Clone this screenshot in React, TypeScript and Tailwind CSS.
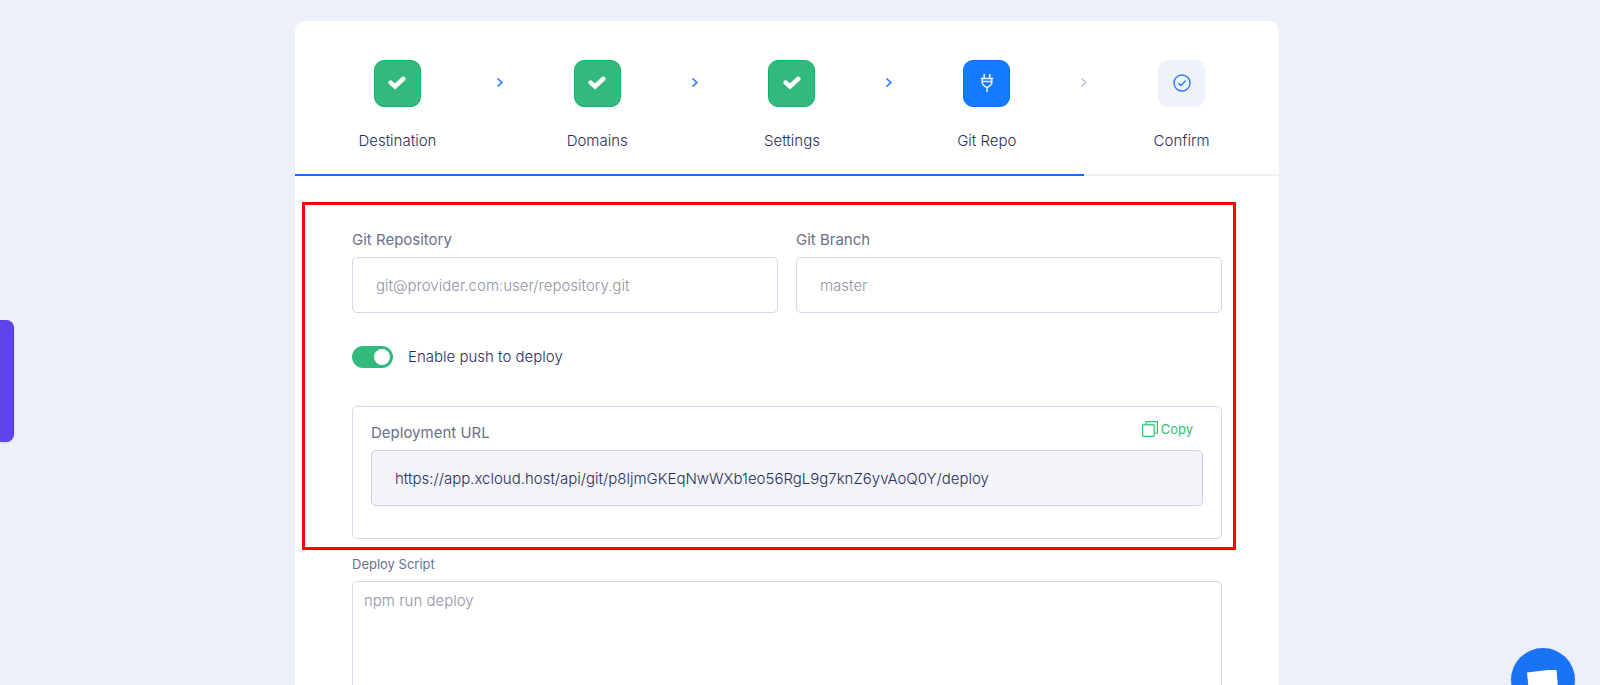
import { useState } from "react";

type StepStatus = "done" | "active" | "pending";

type Step = {
  label: string;
  status: StepStatus;
};

const steps: Step[] = [
  { label: "Destination", status: "done" },
  { label: "Domains", status: "done" },
  { label: "Settings", status: "done" },
  { label: "Git Repo", status: "active" },
  { label: "Confirm", status: "pending" },
];

const boxStyles = {
  done: "bg-[#32ba7c] border-[#12b46c] text-white",
  active: "bg-[#147aff] border-[#0a70ff] text-white",
  pending: "bg-[#eef2f9] border-[#eef2f9] text-[#2b7cff]",
};

const lineStyles = {
  done: "border-[#0b6fff]",
  active: "border-[#0b6fff]",
  pending: "border-[#edf1f8]",
};

function StepIcon({ status }: { status: StepStatus }) {
  if (status === "done") {
    return (
      <svg width="18" height="14" viewBox="0 0 18 14" fill="none" stroke="currentColor" strokeWidth="4.6" strokeLinecap="round" aria-hidden="true">
        <path d="M2.7 6.6 L7 10.4 L15.2 2.9" />
      </svg>
    );
  }

  if (status === "active") {
    return (
      <svg width="14" height="20" viewBox="0 0 14 20" fill="none" stroke="currentColor" strokeOpacity="0.9" strokeWidth="1.5" strokeLinecap="round" aria-hidden="true">
        <path d="M4.2 1.6V5.4M9.8 1.6V5.4M1.4 5.6H12.6M2.2 5.6V9.6C2.2 12 4.4 13.4 7 14.6C9.6 13.4 11.8 12 11.8 9.6V5.6M3 8.4H11M7 14.6V18.4" />
      </svg>
    );
  }

  return (
    <svg width="18" height="18" viewBox="0 0 18 18" fill="none" stroke="currentColor" strokeWidth="1.4" strokeLinecap="round" strokeLinejoin="round" aria-hidden="true">
      <circle cx="9" cy="9" r="8" />
      <path d="M5.8 9.4L8 11.4L12.2 7" />
    </svg>
  );
}

function Stepper() {
  return (
    <ol className="grid grid-cols-[205fr_195fr_195fr_195fr_195fr]">
      {steps.map((step, index) => (
        <li
          key={step.label}
          className={`relative flex flex-col items-center border-b-2 pt-[39px] pb-[21px] ${lineStyles[step.status]}`}
        >
          <div
            className={`flex size-[47px] items-center justify-center rounded-[10px] border pb-0.5 ${boxStyles[step.status]}`}
          >
            <StepIcon status={step.status} />
          </div>
          <span className="mt-[22px] text-[15px] leading-6 text-[#2a2e5c]">{step.label}</span>

          {index < steps.length - 1 && (
            <svg
              className={`absolute top-[56px] -right-1 ${step.status === "active" ? "text-[#bcc6de]" : "text-[#1f7aff]"}`}
              width="8"
              height="11"
              viewBox="0 0 8 11"
              fill="none"
              stroke="currentColor"
              strokeWidth="1.6"
              aria-hidden="true"
            >
              <path d="M1.5 1.5L5.8 5.5L1.5 9.5" />
            </svg>
          )}
        </li>
      ))}
    </ol>
  );
}

type FieldProps = {
  id: string;
  label: string;
  placeholder: string;
};

function Field({ id, label, placeholder }: FieldProps) {
  return (
    <div className="flex flex-col gap-[5px]">
      <label htmlFor={id} className="text-[15px] leading-6 font-normal text-[#6b6f8a]">
        {label}
      </label>
      <input
        id={id}
        type="text"
        placeholder={placeholder}
        className="h-14 w-full rounded-[5px] border border-[#d2d8e8] px-[23px] text-[15px] text-[#2a2e5c] placeholder:text-[#9194a6]"
      />
    </div>
  );
}

export default function App() {
  const [pushToDeploy, setPushToDeploy] = useState(true);
  const deployUrl = "https://app.xcloud.host/api/git/p8ljmGKEqNwWXb1eo56RgL9g7knZ6yvAoQ0Y/deploy";

  return (
    <main className="h-screen overflow-hidden bg-[#ebf0f9] pt-[21px] pr-[26px] font-['Inter',sans-serif] font-light">
      <div className="mx-auto w-full max-w-[984px] rounded-t-[10px] bg-white">
        <Stepper />

        <form className="px-[57px] pt-[52px]">
          <div className="relative">
            <div className="grid grid-cols-2 gap-[18px]">
              <Field id="repository" label="Git Repository" placeholder="git@provider.com:user/repository.git" />
              <Field id="branch" label="Git Branch" placeholder="master" />
            </div>

            <label className="mt-8 flex w-fit items-center gap-[15px] text-[15px] leading-6 text-[#2a2e5c]">
              <input
                type="checkbox"
                checked={pushToDeploy}
                onChange={(e) => setPushToDeploy(e.target.checked)}
                className="peer sr-only"
              />
              <span className="flex h-[22px] w-[41px] items-center rounded-full bg-[#c5cbdc] px-[3px] peer-checked:justify-end peer-checked:bg-[#32ba7c]">
                <span className="size-4 rounded-full bg-white" />
              </span>
              Enable push to deploy
            </label>

            <div className="mt-[37px] rounded-[5px] border border-[#d2d8e8] px-[18px] pt-3.5 pb-8">
              <div className="flex items-start justify-between pb-[5px]">
                <label htmlFor="deploy-url" className="text-[15px] leading-6 font-normal text-[#6b6f8a]">
                  Deployment URL
                </label>
                <button
                  type="button"
                  onClick={() => navigator.clipboard.writeText(deployUrl)}
                  className="mr-[10px] flex items-center gap-[3px] text-[13px] leading-4 font-normal text-[#2fbf71]"
                >
                  <svg width="16" height="16" viewBox="0 0 16 16" fill="none" stroke="currentColor" strokeWidth="1.2" strokeLinejoin="round" aria-hidden="true">
                    <rect x="0.6" y="3.8" width="11.6" height="11.6" rx="0.8" />
                    <path d="M4 3.8V0.6H15.4V12H12.2" />
                  </svg>
                  Copy
                </button>
              </div>
              <input
                id="deploy-url"
                type="text"
                readOnly
                value={deployUrl}
                className="block h-14 w-full rounded-[5px] border border-[#cdd2e4] bg-[#f2f4f9] px-[23px] text-[15px] text-[#2a2e5c]"
              />
            </div>

            {/* highlight around the git settings */}
            <div className="pointer-events-none absolute -top-[26px] -right-[14px] -bottom-[11px] -left-[50px] border-3 border-[#ff0000]" />
          </div>

          <label htmlFor="deploy-script" className="mt-[15px] block text-[13px] leading-5 font-normal text-[#6b6f8a]">
            Deploy Script
          </label>
          <textarea
            id="deploy-script"
            rows={6}
            placeholder="npm run deploy"
            className="mt-[7px] block w-full resize-none rounded-[5px] border border-[#d2d8e8] px-[11px] py-[7px] text-[15px] leading-6 text-[#2a2e5c] placeholder:text-[#9194a6]"
          />
        </form>
      </div>

      <button
        type="button"
        aria-label="Feedback"
        className="fixed top-80 left-0 h-[122px] w-3.5 rounded-r-lg border-r border-[#5230e8] bg-[#6044ea] shadow-sm"
      />

      <button
        type="button"
        aria-label="Chat"
        className="fixed right-[25px] -bottom-[27px] flex size-16 justify-center rounded-full bg-[#1a73f5] pt-[22px] shadow-sm"
      >
        <svg width="34" height="34" viewBox="0 0 34 34" fill="#ffffff" aria-hidden="true">
          <path d="M1 2.4L30.4 -1L33 29L4 32Z" overflow="visible" />
        </svg>
      </button>
    </main>
  );
}
